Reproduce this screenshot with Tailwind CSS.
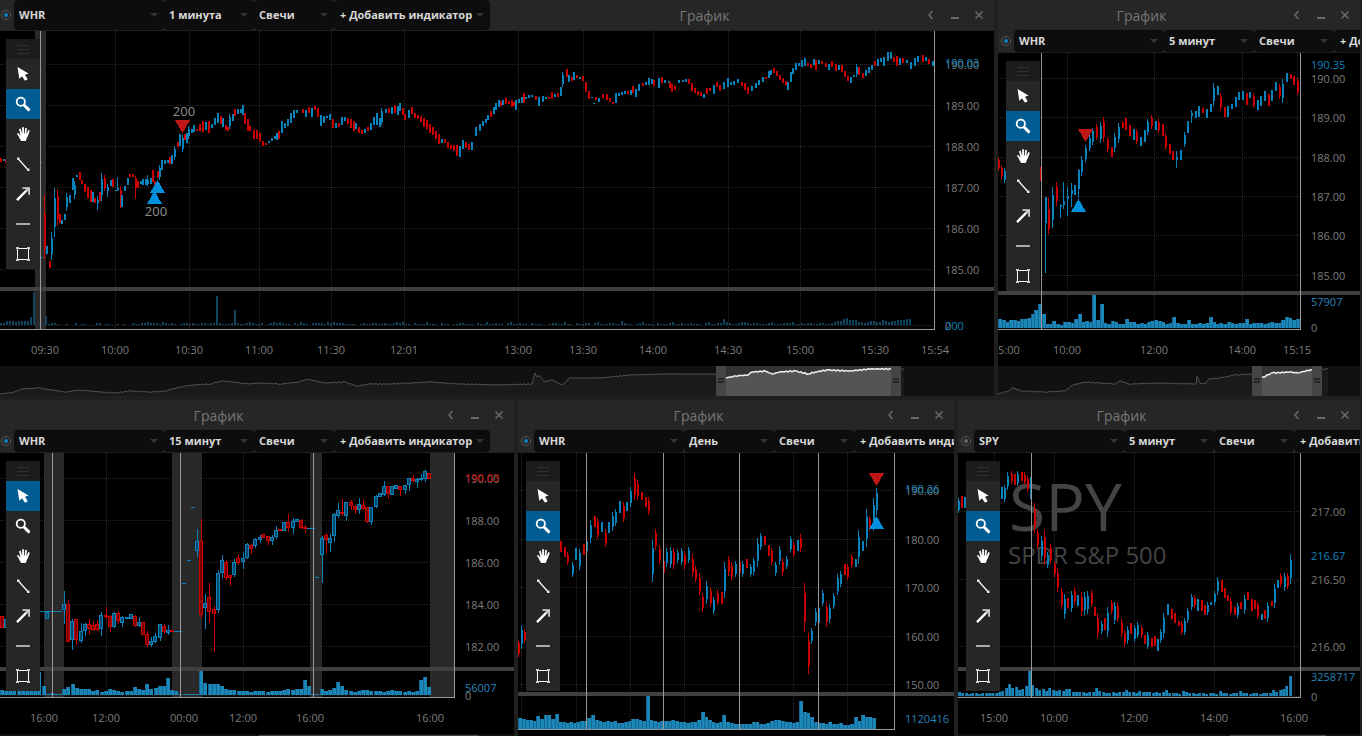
<!DOCTYPE html>
<html lang="ru">

<head>
    <meta charset="UTF-8">
    <meta name="viewport" content="width=device-width, initial-scale=1.0">
    <script src="https://cdn.jsdelivr.net/npm/@tailwindcss/browser@4"></script>
    <title>График</title>
</head>

<body class="bg-[#1f1f1f] overflow-hidden font-['Open_Sans','Noto_Sans',sans-serif]">

    <!-- Icons of the drawing tools -->
    <svg class="hidden">
        <symbol id="icon-cursor" viewBox="0 0 16 16">
            <path fill="#fff" d="M2.5 1 4.3 12.8 7 10.3 10 14.8 12.7 13.2 10 8.8 13.5 7.5Z" />
        </symbol>
        <symbol id="icon-zoom" viewBox="0 0 16 16">
            <circle cx="5.8" cy="5.8" r="4.1" fill="none" stroke="#fff" stroke-width="1.8" />
            <path d="M9.2 9.2 13.6 13.6" stroke="#fff" stroke-width="3" stroke-linecap="round" />
        </symbol>
        <symbol id="icon-hand" viewBox="0 0 16 16">
            <path d="M3 8 6 11.5M5 3.5 6.5 9M8 1.8 8.2 9M11 2.6 10.4 9M13.8 5 12 10" stroke="#fff" stroke-width="1.8" stroke-linecap="round" />
            <path fill="#fff" d="M5.5 7.5H12.8L12 11.5 10.8 15H6.2L3.5 10.5 5.5 10.5Z" />
        </symbol>
        <symbol id="icon-segment" viewBox="0 0 16 16">
            <path d="M3 2.5 13.2 14" stroke="#fff" stroke-width="1.2" />
            <path fill="#ddd" d="M2 1.5h2.5v2.5H2zM12 12.5h2.5V15H12z" />
        </symbol>
        <symbol id="icon-arrow" viewBox="0 0 16 16">
            <path d="M2 14.2 12 4" stroke="#fff" stroke-width="2.4" />
            <path fill="#ccc" d="M7.5 1.2H15V8.8H13.2V4.4L11.5 5.8 10.3 4.6 12 3H7.5Z" />
        </symbol>
        <symbol id="icon-level" viewBox="0 0 16 16">
            <path fill="#aaa" d="M1 7h14v2H1z" />
        </symbol>
        <symbol id="icon-rect" viewBox="0 0 16 16">
            <path d="M2.5 2.5h11v11h-11z" fill="none" stroke="#fff" />
            <path fill="#ccc" d="M1 1h3v2H1zM12 1h3v2h-3zM1 13h3v2H1zM12 13h3v2h-3z" />
        </symbol>
    </svg>

    <main class="-ml-0.5 h-screen flex flex-col gap-1 pr-0.5">
        <div class="flex-[396] min-h-0 grid grid-cols-[996fr_362fr] gap-1">
            <section id="whr-1" aria-label="WHR, 1 минута" class="min-w-0 min-h-0 flex flex-col overflow-hidden bg-[#262626]"></section>
            <section id="whr-5" aria-label="WHR, 5 минут" class="min-w-0 min-h-0 flex flex-col overflow-hidden bg-[#262626]"></section>
        </div>
        <div class="flex-[336] min-h-0 grid grid-cols-[516fr_436fr_402fr] gap-1">
            <section id="whr-15" aria-label="WHR, 15 минут" class="min-w-0 min-h-0 flex flex-col overflow-hidden bg-[#262626]"></section>
            <section id="whr-day" aria-label="WHR, День" class="min-w-0 min-h-0 flex flex-col overflow-hidden bg-[#262626]"></section>
            <section id="spy-5" aria-label="SPY, 5 минут" class="min-w-0 min-h-0 flex flex-col overflow-hidden bg-[#262626]"></section>
        </div>
    </main>

    <script>
        var UP = '#0a83bd';
        var DOWN = '#cc0000';

        // Candles: u/d + x, high, low [, body top, body bottom]
        // Volumes: one base-36 digit per bar, its height in pixels
        var charts = [
            {
                id: 'whr-1', symbol: 'WHR', period: '1 минута', compact: true, tool: 1,
                origin: [-2, 31], right: 934, bottom: 329, split: 287, labelX: 945, timeY: 349,
                rows: [[64, '190.00'], [105, '189.00'], [146, '188.00'], [187, '187.00'], [228, '186.00'], [269, '185.00'], [325, '0']],
                cols: [[45, '09:30'], [115, '10:00'], [189, '10:30'], [259, '11:00'], [331, '11:30'], [404, '12:01'], [518, '13:00'], [583, '13:30'], [653, '14:00'], [728, '14:30'], [800, '15:00'], [875, '15:30']],
                times: [[935, '15:54']],
                tags: [[62, '190.03', '#0a83bd'], [325, '200', '#0a83bd']],
                bands: [[35, 11]], lines: [40],
                marks: [['down', 182, 120], ['up', 157, 181], ['up', 154, 192]],
                notes: [[184, 116, '200'], [156, 216, '200']],
                candles: 'd0,158,162 u3,159,161 d5,159,163 u40,162,163 u41,257,258 d44,195,259,214,249 u46,246,254 d49,261,268 u51,232,260 u54,188,237 d57,189,226 d59,214,223 u61,220,224 u64,214,220 u66,193,211 u69,195,203 u72,178,190 u74,181,199 u76,175,177 d79,172,180 d81,180,184 d84,184,192 d87,187,198 d90,190,202 u92,192,202 d94,198,203 u97,196,210,200,203 d99,192,201 u101,173,201 d104,175,191 u107,184,197,187,191 u110,180,186 d112,179,187 u115,190,191 u117,177,191,188,190 d120,186,208 u121,195,207 u124,186,191 u127,178,185 d129,174,177 d132,174,177 d135,176,199,178,188 d137,181,188 u140,181,184 u142,179,185 u145,179,185 u147,175,186,180,184 u150,178,184 d152,170,182 d154,181,186 d157,171,178 u159,165,180 u161,160,170 u164,160,164 u167,160,163 d169,157,164 u171,155,164 u174,146,160 d177,142,147 u179,134,146 u182,135,152 d184,134,140 u186,133,143 u188,126,139 u191,129,133 u193,125,132 d196,129,131 d199,124,131 d202,121,132 u205,122,130 d208,121,133 u211,124,128 u214,118,125 u217,113,123 d220,116,124 u222,118,127 d225,125,130 d227,127,131 u229,114,129 u232,114,121 d234,109,116 u237,109,114 u240,109,113 u242,105,115 d244,113,124 d247,119,131 d249,126,131 d253,130,139 d256,130,139 d259,133,142 d262,141,146 d265,143,145 u268,141,143 u271,138,141 u274,136,139 u276,133,140 d278,131,139 u281,121,133 u284,123,128 u287,119,126 u290,113,123 u293,110,118 u296,110,113 d302,109,113 u305,110,117 d308,107,113 u311,108,117 d314,106,110 d317,108,117 u320,115,126 u323,116,123 u326,116,118 u329,114,120 d332,119,128 u335,123,128 d338,123,127 u341,117,125 u344,117,121 d347,118,124 d350,119,128 d353,121,131 u355,123,129 d358,127,133 d361,130,134 u364,129,133 d367,127,131 u370,123,130 u373,117,125 u376,113,125 u379,118,127 u381,108,125 u385,109,113 d388,108,113 u391,107,114 d394,105,113 u397,106,115 u399,103,111 d402,108,115 d404,114,120 u408,110,118 d411,107,114 d414,113,118 d417,115,119 d420,116,122 d423,118,127 d426,120,129 d429,124,133 d432,127,135 d435,131,139 d438,134,144 u441,139,143 d444,139,143 d447,142,148 d450,145,149 d453,145,151 d456,145,156 u459,146,157 u462,140,149 d465,142,148 d468,144,150 u471,142,150 u475,127,136 u479,124,131 u482,121,126 u485,119,123 u487,115,120 d490,111,117 u493,107,114 u495,103,110 u498,100,107 d500,101,106 u502,100,105 d505,98,104 d508,101,104 d511,100,107 d513,102,106 u515,100,110 u518,99,103 u521,97,103 d523,93,103 u525,97,99 u528,95,98 u531,95,97 d535,96,100 u538,97,106 u542,96,102 u545,97,99 d548,97,99 d551,92,99 u554,94,97 d557,93,97 u560,87,96 u562,72,87 d566,69,77 u568,75,82 d571,77,81 u573,72,80 d576,75,78 u579,77,79 d582,76,81 d585,82,92 d588,91,99 u591,97,98 u593,103,104 d595,97,100 u598,98,102 d602,94,98 d606,94,100 d609,98,102 d612,102,104 u615,93,103 u618,93,96 u621,92,95 u624,91,94 d627,91,94 u630,90,95 d632,86,93 u635,89,97 u638,84,91 d642,83,86 u645,82,85 u648,78,85 u651,79,84 d653,80,86 u658,78,88 d661,77,83 u664,80,83 u668,81,83 d669,82,88 d671,84,92 d674,86,90 u678,80,83 u682,80,82 u685,79,82 d688,79,84 d691,83,91 d694,88,93 d697,91,95 d700,92,96 u703,94,98 d706,88,94 d709,88,91 u713,85,94 d716,82,87 d719,85,91 u723,82,89 u727,78,87 u730,82,85 u733,81,85 u737,79,83 d741,82,86 d744,83,90 d747,87,94 u751,86,91 u755,83,88 u758,80,85 u762,77,82 d765,77,79 u768,71,78 u770,70,75 d773,68,73 d776,71,76 d779,75,80 d782,78,83 d785,81,85 u787,82,90 u790,72,82 u792,68,74 u795,63,70 u798,63,66 u801,60,67 u804,58,66 d807,63,66 d810,64,68 u813,59,65 d815,60,70 u818,60,64 d821,61,64 d825,63,67 u828,64,70 d831,61,67 d835,64,71 u838,65,70 d841,65,72 d844,71,77 d847,76,81 u850,77,83 u853,75,77 u856,64,77 d858,67,75 d862,73,78 u865,70,76 u868,67,73 u871,65,70 d874,61,66 u877,59,66 u880,58,62 u883,57,66 u887,52,61 u890,52,59 d893,57,62 d896,56,66 u899,58,65 d902,58,63 u906,60,63 u910,62,69 u914,58,66 u917,56,62 d922,55,62 u925,57,61 d928,59,64 u932,61,66',
                volumes: { base: 325, step: 3, width: 2, fill: '#0f4560', bars: '22444344448x011912210010020110002201100101002112232221321210122121122122t21112f211232112012323211021321022221323222111101211221121123231102111311102110112211102113112110231121102111001221131102112202311122114211012311102111231121121110231122632112332122111231112223112122112211234467555332344335434455566' },
                nav: {
                    h: 30, from: 716, to: 901, end: 904,
                    line: '0,394 15,392 22,389 38,388 52,390 65,392 80,390 100,392 115,393 130,391 150,392 165,391 180,387 192,385 210,384 222,381 235,382 245,384 262,383 280,384 300,382 306,379 325,383 345,382 357,386 370,384 390,384 410,383 430,382 460,384 500,385 532,384 535,373 537,377 540,376 544,382 552,380 562,385 570,378 580,378 600,378 630,375 665,374 690,374 715,374 726,378 735,376 748,375 752,372 765,371 772,374 780,372 795,371 808,374 815,372 828,370 850,371 870,369 904,369'
                }
            },
            {
                id: 'whr-5', symbol: 'WHR', period: '5 минут', tool: 1,
                origin: [998, 53], right: 1300, bottom: 329, split: 291, labelX: 1311, timeY: 349,
                rows: [[78, '190.00'], [117, '189.00'], [157, '188.00'], [196, '187.00'], [235, '186.00'], [275, '185.00'], [327, '0']],
                cols: [[1067, '10:00'], [1154, '12:00'], [1242, '14:00'], [1297, '15:15']],
                times: [[1009, '5:00']],
                tags: [[64, '190.35', '#0a83bd'], [301, '57907', '#2a82ba']],
                bands: [], lines: [1041],
                marks: [['down', 1085, 129], ['up', 1078, 200]], notes: [],
                candles: 'd998,157,171 d1001,165,179 u1004,168,183 d1040,167,181,170,172 u1045,197,273,197,223 d1048,198,234,209,229 u1052,187,228 d1056,182,206 u1060,204,218,205,207 u1063,182,209,201,205 u1067,187,216,196,199 u1071,183,207,190,194 u1074,185,195 u1078,169,198,170,189 u1081,156,176 u1085,145,162 u1089,135,151 u1092,128,145 d1096,124,140 u1100,122,143 d1103,117,142 d1107,137,152 d1111,147,157 u1114,133,152 u1118,123,143 d1122,122,128 d1125,118,130 d1129,125,136 u1133,129,140 d1136,129,144 u1140,137,146 u1144,130,142 u1147,119,135 d1151,115,129 u1155,121,130 d1158,119,133 d1162,124,136 d1165,133,150 d1169,144,154 d1172,151,160 u1176,151,168,157,160 u1180,150,160 u1184,132,147 u1187,121,133 u1191,110,123,113,116 u1195,111,118 u1198,106,117 d1202,108,113 u1206,109,118 u1210,104,112 u1213,83,106 u1217,86,95 d1220,93,111 d1224,107,117 u1227,106,117 u1231,104,109 u1235,97,107 u1238,92,100 u1242,91,100 d1246,93,105 u1249,92,98 d1253,93,108 u1257,100,110 u1260,96,106 u1264,91,101 d1268,94,106 u1271,90,101 u1275,82,91 d1279,84,99 u1282,79,103 u1286,73,82 d1290,74,79 d1293,76,85 d1297,78,95',
                volumes: { base: 328, step: 3.63, width: 4, fill: '#1c86b8', bars: '98688799aeioe447436659e676y8o5476449664546787645b544844545b64546545594555456558ba8978' },
                nav: {
                    h: 30, from: 1252, to: 1322, end: 1328,
                    line: '998,394 1008,391 1013,388 1022,391 1045,392 1065,391 1073,385 1085,382 1115,384 1120,381 1130,384 1160,383 1196,384 1197,376 1200,383 1205,384 1209,379 1220,378 1235,375 1252,374 1263,377 1272,373 1290,372 1297,373 1310,370 1328,369'
                }
            },
            {
                id: 'whr-15', symbol: 'WHR', period: '15 минут', tool: 0, hollow: true,
                origin: [-2, 453], right: 454, bottom: 697, split: 667, labelX: 465, timeY: 717,
                rows: [[478, '190.00'], [520, '188.00'], [562, '186.00'], [604, '184.00'], [646, '182.00'], [695, '0']],
                cols: [[44, '16:00'], [106, '12:00'], [184, '00:00'], [243, '12:00'], [310, '16:00'], [430, '16:00']],
                times: [],
                tags: [[477, '190.03', '#cc0000'], [687, '56007', '#2a82ba']],
                bands: [[44, 20], [172, 30], [310, 12], [430, 25]], lines: [52, 180, 313],
                marks: [], notes: [],
                dashes: [[40, 22, 611], [174, 8, 631], [182, 4, 583], [187, 4, 560], [191, 4, 507], [307, 8, 528], [315, 4, 577]],
                candles: 'd0,616,628 u4,619,628 u45,612,619 u62,591,624,604,610 d66,600,642,604,642 u70,619,650,621,640 d74,619,645,619,640 u79,623,643,631,641 u83,623,636,624,631 d87,619,635,624,629 d91,622,631,625,630 d95,620,631,624,630 u99,612,636,615,629 d104,607,619,615,617 d108,615,632,616,627 u112,612,628,613,627 d116,611,624,613,621 u120,616,627,617,623 u125,617,619 u129,614,619 d133,615,627,616,626 u137,617,627,622,626 d141,622,635 d145,631,647,634,645 u149,637,647,641,645 u153,633,643,636,642 u158,624,641,624,638 d162,624,634,626,632 u166,625,635,630,633 d170,630,632 u195,529,557,541,551 d199,519,618,541,615 u203,594,629,603,608 d207,583,623,597,612 d212,606,652,609,614 u216,570,613,573,610 u220,555,578,560,573 d224,560,580,562,578 d228,575,586,575,578 u232,559,577,562,575 d236,554,565,558,563 u241,552,569,558,562 u245,543,559,544,558 d249,544,554,545,549 u253,538,548,539,546 u258,535,543,537,540 d261,534,538 d266,536,545,536,541 u270,535,545,537,541 u274,526,539,530,537 d278,529,531 u282,522,531 d286,514,532,522,528 u291,518,534,521,528 u295,519,522 d299,519,529,520,528 d303,525,533,527,529 u320,536,583,538,555 d324,533,553,535,540 u328,534,552,538,543 u332,513,542,514,536 u336,503,518,510,516 d340,499,516,512,514 u344,502,521,502,516 d349,500,510,502,506 d353,505,514,506,510 u357,498,514,504,510 d361,500,510,505,509 d365,507,523,507,522 u369,507,525,507,522 u374,495,508,496,507 u378,493,497 u382,481,496,486,495 d386,486,499,486,494 u390,486,495 u394,485,489 d398,486,496,486,490 u403,485,494,485,490 u407,478,491,478,485 d411,475,483,478,481 u415,478,488,479,482 u419,474,481,478,480 u423,470,482,471,479 d427,473,479',
                volumes: { base: 695, step: 4.15, width: 4, fill: '#1c86b8', bars: '544444444n9121168b76664534654344865b6799h5411111ocbbb96554443444344456566f9116457d9543455444345443434fi8' },
                nav: { thumb: [259, 220] }
            },
            {
                id: 'whr-day', symbol: 'WHR', period: 'День', tool: 1,
                origin: [518, 453], right: 894, bottom: 729, split: 692, labelX: 905, timeY: 750,
                rows: [[490, '190.00'], [539, '180.00'], [587, '170.00'], [636, '160.00'], [684, '150.00']],
                cols: [[521, ''], [576, ''], [630, ''], [684, ''], [793, ''], [847, '']],
                times: [],
                tags: [[488, '190.26', '#0a83bd'], [718, '1120416', '#2a82ba']],
                bands: [], lines: [586, 663, 739, 818],
                marks: [['down', 876, 473], ['up', 876, 517]], notes: [],
                candles: 'd518,640,657 u521,625,649 d524,629,643 d560,541,552 d564,547,557 d567,552,565 u572,562,577 u575,548,560 u579,549,570 d583,544,555 u586,537,555 u590,520,543 d594,516,527 d597,518,539 u601,522,532 d605,529,547 u608,522,533 u612,512,531 u615,509,526 u619,501,513 d623,502,522 u626,502,511 u630,487,507 d634,473,500 d637,480,500 d641,492,500 d645,497,507 d648,497,515 u652,540,582 d655,529,550 d659,545,564 d663,561,573 u666,548,567 u670,547,568 d673,548,569 u677,550,563 u681,548,565 d684,551,569 u688,547,563 d692,554,577 d695,566,582 d699,573,596 d702,593,612 u706,581,604 d710,587,607 u713,597,614 d717,590,605 d721,592,604 u724,562,598 d728,556,576 d731,562,580 u735,561,577 d739,562,573 u742,561,577 d746,559,568 u750,564,577 u753,558,575 u757,538,567 u760,533,550 d764,536,545 d768,545,556 d771,548,565 u775,562,576 u779,546,565 d782,558,576 u786,556,569 u790,536,552 d793,542,557 u797,540,551 d800,534,552 d804,583,632 d808,633,674 u811,628,644 u815,608,626 u818,603,628 u822,590,606 d826,602,627 u829,604,623 u833,593,609 u837,574,595 u840,571,587 d844,564,575 d847,564,580 d851,554,568 u855,559,567 u858,530,564 u862,541,551 u866,509,547 d869,516,531 u873,498,531 u876,488,515',
                volumes: { base: 729, step: 3.65, width: 4, fill: '#1c86b8', bars: 'ba998daeeaf77676788be9878786678aa98y98788898776779hc9767e76555557755689987767shgc76657556445c8eccb' }
            },
            {
                id: 'spy-5', symbol: 'SPY', period: '5 минут', tool: 1, idle: true,
                origin: [958, 453], right: 1300, bottom: 697, split: 667, labelX: 1311, timeY: 717,
                rows: [[511, '217.00'], [579, '216.50'], [646, '216.00'], [696, '0']],
                cols: [[994, '15:00'], [1054, '10:00'], [1134, '12:00'], [1214, '14:00'], [1294, '16:00']],
                times: [],
                tags: [[555, '216.67', '#0a83bd'], [676, '3258717', '#2a82ba']],
                bands: [], lines: [1031],
                marks: [], notes: [], watermark: ['SPY', 'SPDR S&amp;P 500'],
                candles: 'u958,498,513 d961,496,508 u964,497,508 u1001,487,499 u1004,485,502 u1007,472,490 d1011,471,484 d1014,474,485 u1017,471,486 d1021,472,481 d1024,472,485 d1027,476,492 u1030,477,499,480,490 d1034,503,533 d1037,529,549 u1041,536,561 d1044,530,565 u1047,552,568 d1050,544,564 d1054,561,577 d1057,568,592 d1061,588,609 u1064,594,619 d1067,598,608 u1071,591,612 d1074,587,605 u1077,595,606 d1081,592,616 u1084,592,615 u1087,591,614 d1091,590,607 d1094,607,616 d1097,613,638 u1101,621,634 d1104,618,630 u1107,607,637 d1111,600,614 u1114,602,624 d1117,602,622 d1121,619,637 d1124,630,646 u1127,626,644 d1130,623,634 u1134,625,642 u1137,622,638 d1141,625,638 d1144,635,644 u1147,632,649 d1151,638,647 d1154,636,646 u1157,639,651 u1160,629,643 u1163,613,638 u1167,604,615 d1171,609,619 d1174,613,623 d1178,621,626 d1181,621,635 u1184,618,635 u1187,608,623 u1191,594,610 d1194,595,608 u1197,599,611 d1201,600,611 d1204,605,615 u1207,602,615 u1210,602,605 u1214,591,605 u1217,577,595 d1221,580,592 d1224,588,598 d1227,595,601 d1230,598,615 d1234,607,615 u1237,603,618 d1240,602,609 u1244,595,614 d1247,592,600 d1251,599,611 d1254,600,609 d1257,602,619 u1261,614,620 d1264,610,619 u1267,602,622 d1271,601,606 u1274,584,608 u1277,580,588 d1280,573,587 u1284,573,591 d1287,573,589 u1290,554,584',
                volumes: { base: 696, step: 3.34, width: 3, fill: '#1c86b8', bars: '433233233333458c8967aqb867586565774444344854334344644354443434633325433233233253323353323323336467ak' },
                nav: { thumb: [1230, 96] }
            }
        ];

        var tools = [
            ['cursor', 'Курсор'], ['zoom', 'Масштаб'], ['hand', 'Перемещение'], ['segment', 'Отрезок'],
            ['arrow', 'Стрелка'], ['level', 'Уровень'], ['rect', 'Прямоугольник']
        ];

        function rect(x, y, w, h, fill) {
            return `<rect x="${x}" y="${y}" width="${w}" height="${h}" fill="${fill}"/>`;
        }

        function label(x, y, text, fill, anchor) {
            return text ? `<text x="${x}" y="${y + 5}" fill="${fill}" text-anchor="${anchor || 'start'}">${text}</text>` : '';
        }

        function select(name, value, width) {
            return `<div class="relative flex shrink-0 ${width}">
                <select aria-label="${name}" class="appearance-none block w-full h-full pl-[5px] rounded-sm bg-[#0d0d0d] text-[#d8d8d8] text-[11px] leading-4 font-bold outline-none"><option>${value}</option></select>
                <svg class="absolute right-1.5 top-1/2 -mt-0.5 w-2 h-1" viewBox="0 0 8 4"><path fill="#333" d="M0 0h8L4 4z"/></svg>
            </div>`;
        }

        function controls(c) {
            return `<div class="flex shrink-0 min-w-0 pl-1 ${c.compact ? 'h-[30px]' : 'h-[22px]'}">
                <div class="w-3 shrink-0 flex items-center">
                    <input type="radio" aria-label="Связать графики" class="appearance-none size-2 rounded-full outline outline-[#555] border-2 border-[#262626] checked:bg-[#0a83bd] bg-[#666]" ${c.idle ? '' : 'checked'}>
                </div>
                ${select('Инструмент', c.symbol, 'w-[150px]')}
                ${select('Период', c.period, 'w-[90px]')}
                ${select('Вид', 'Свечи', 'w-20')}
                <button type="button" class="shrink-0 w-[156px] px-1.5 flex items-center justify-between rounded-sm bg-[#0d0d0d] text-[#d8d8d8] text-[11px] leading-4 font-bold whitespace-nowrap">+ Добавить индикатор
                    <svg class="w-2 h-1" viewBox="0 0 8 4"><path fill="#333" d="M0 0h8L4 4z"/></svg>
                </button>
            </div>`;
        }

        function header(c) {
            return `<header class="flex items-center shrink-0 h-[30px] text-[#777]">
                ${c.compact ? controls(c) : ''}
                <h2 class="flex-1 text-center text-sm pt-0.5">График</h2>
                <div class="flex w-[75px] shrink-0">
                    <button type="button" aria-label="Назад" class="w-6"><svg class="size-3 mx-auto" viewBox="0 0 12 12"><path d="M7.5 2 4 6 7.5 10" fill="none" stroke="#6a6a6a" stroke-width="1.5"/></svg></button>
                    <button type="button" aria-label="Свернуть" class="w-6"><svg class="size-3 mx-auto" viewBox="0 0 12 12"><path d="M2 9h8" stroke="#6a6a6a" stroke-width="2"/></svg></button>
                    <button type="button" aria-label="Закрыть" class="w-6"><svg class="size-3 mx-auto" viewBox="0 0 12 12"><path d="M2.5 2.5 9.5 9.5M9.5 2.5 2.5 9.5" stroke="#6a6a6a" stroke-width="1.5"/></svg></button>
                </div>
            </header>`;
        }

        function toolbox(c) {
            return `<div role="toolbar" aria-label="Рисование" class="absolute left-2 top-2 w-[34px] bg-[#262626]">
                <div class="h-5 bg-[#1c1c1c] flex flex-col items-center justify-center gap-[3px]">
                    <i class="w-3 h-px bg-[#303030]"></i><i class="w-3 h-px bg-[#303030]"></i><i class="w-3 h-px bg-[#303030]"></i>
                </div>
                ${tools.map((t, i) => `<button type="button" aria-label="${t[1]}" class="flex w-full h-[30px] items-center justify-center ${i === c.tool ? 'bg-[#005c91]' : ''}"><svg class="size-4"><use href="#icon-${t[0]}"/></svg></button>`).join('')}
            </div>`;
        }

        function candle(text, hollow) {
            var color = text[0] === 'u' ? UP : DOWN;
            var [x, high, low, top, bottom] = text.slice(1).split(',').map(Number);
            if (hollow) {
                top = top || high;
                bottom = bottom || low;
                return rect(x + 2, high, 1, low - high, color)
                    + `<rect x="${x + .5}" y="${top + .5}" width="3" height="${Math.max(bottom - top - 1, 1)}" fill="${color === UP ? '#06496b' : '#7a0000'}" stroke="${color}"/>`;
            }
            if (top) return rect(x, high, 1, low - high, color) + rect(x, top, 2, bottom - top, color);
            // short bars are all body, long ones get a wick at both ends
            var cut = low - high > 12 ? Math.round((low - high) / 5) : 0;
            return rect(x, high, 1, low - high, color) + rect(x, high + cut, 2, low - high - cut * 2, color);
        }

        function plot(c) {
            var left = c.origin[0], top = c.origin[1], out = '';
            c.rows.forEach(r => out += `<path d="M${left} ${r[0] + .5}H${c.right}" stroke="#262626" stroke-dasharray="1 1"/>`);
            c.bands.forEach(b => out += rect(b[0], top, b[1], c.bottom - top, '#292929'));
            c.cols.forEach(v => out += `<path d="M${v[0] + .5} ${top}V${c.bottom}" stroke="#2b2b2b" stroke-dasharray="1 1"/>`);
            if (c.watermark) {
                out += `<text x="1009" y="531" fill="#444" font-size="66">${c.watermark[0]}</text>`
                    + `<text x="1008" y="564" fill="#444" font-size="24">${c.watermark[1]}</text>`;
            }
            out += c.candles.split(' ').map(s => candle(s, c.hollow)).join('');
            (c.dashes || []).forEach(d => out += rect(d[0], d[2], d[1], 1, UP));

            var v = c.volumes;
            v.bars.split('').forEach((ch, i) => {
                var x = Math.round(Math.max(left, 0) + i * v.step), h = parseInt(ch, 36);
                var w = Math.min(v.width, c.right - x);
                if (!h || w <= 0) return;
                out += rect(x, v.base - h, w, h, v.fill);
                if (v.width > 2) out += rect(x, v.base - h, 1, h, '#14688f');
            });

            out += rect(left, c.split, 1000, 4, '#404040');
            c.lines.forEach(x => out += rect(x, top, 1, c.bottom - top, '#999'));
            out += rect(c.right, top, 1, c.bottom - top + 1, '#999') + rect(left, c.bottom, c.right - left, 1, '#999');

            c.marks.forEach(([kind, x, y]) => {
                out += kind === 'up'
                    ? `<path fill="#008fdd" d="M${x - 7} ${y + 12}h15l-7.5-13z"/>`
                    : `<path fill="#be1717" d="M${x - 7} ${y}h15l-7.5 13z"/>`;
            });
            c.notes.forEach(n => out += `<text x="${n[0]}" y="${n[1]}" fill="#8c8c8c" font-size="13" text-anchor="middle">${n[2]}</text>`);
            c.rows.forEach(r => out += label(c.labelX, r[0], r[1], '#7c7c7c'));
            c.tags.forEach(t => out += label(c.labelX, t[0], t[1], t[2]));
            c.cols.concat(c.times).forEach(t => out += label(t[0], c.timeY, t[1], '#7c7c7c', 'middle'));
            return `<svg class="block w-full h-full text-[11px]" shape-rendering="crispEdges"><g transform="translate(${-left} ${-top})">${out}</g></svg>`;
        }

        function history(c) {
            var n = c.nav, left = c.origin[0];
            if (!n) return '';
            if (n.thumb) {
                return `<svg class="block w-full h-0.5 shrink-0 bg-[#111]"><g transform="translate(${-left} 0)">${rect(n.thumb[0], 1, n.thumb[1], 1, '#444')}</g></svg>`;
            }
            var inside = n.from + 10, width = n.to - n.from - 20;
            var pts = n.line.split(' ').map(p => p.split(',').map(Number));
            // small jitter so the long history does not look like straight strokes
            var line = [];
            pts.forEach((p, i) => {
                var q = pts[i + 1];
                line.push(p.join());
                if (q) for (var x = p[0] + 2; x < q[0]; x += 2) {
                    line.push(x + ',' + (p[1] + (q[1] - p[1]) * (x - p[0]) / (q[0] - p[0]) + Math.sin(x * 1.7) * .6).toFixed(1));
                }
            });
            line = line.join(' ');
            var area = `${left},396 ${line} ${n.end},396`;
            var grip = x => rect(x, 366, 10, 30, '#454545') + rect(x + 2, 378, 6, 2, '#262626') + rect(x + 2, 381, 6, 2, '#262626');
            return `<svg class="block w-full h-[30px] shrink-0 bg-[#111]"><defs><clipPath id="${c.id}-view"><rect x="${inside}" y="366" width="${width}" height="30"/></clipPath></defs>
                <g transform="translate(${-left} -366)">
                    <polygon points="${area}" fill="#1a1a1a"/><polyline points="${line}" fill="none" stroke="#505050"/>
                    ${rect(inside, 366, width, 30, '#333')}
                    <g clip-path="url(#${c.id}-view)"><polygon points="${area}" fill="#545454"/><polyline points="${line}" fill="none" stroke="#eee" stroke-width="1.5"/></g>
                    ${grip(n.from)}${grip(n.to - 10)}
                </g></svg>`;
        }

        charts.forEach(c => {
            document.getElementById(c.id).innerHTML = header(c) + (c.compact ? '' : controls(c))
                + `<div class="relative flex-1 min-h-0 border-t border-[#1f1f1f] bg-black"><div class="relative h-full">${plot(c)}${toolbox(c)}</div></div>`
                + history(c);
        });
    </script>
</body>

</html>
